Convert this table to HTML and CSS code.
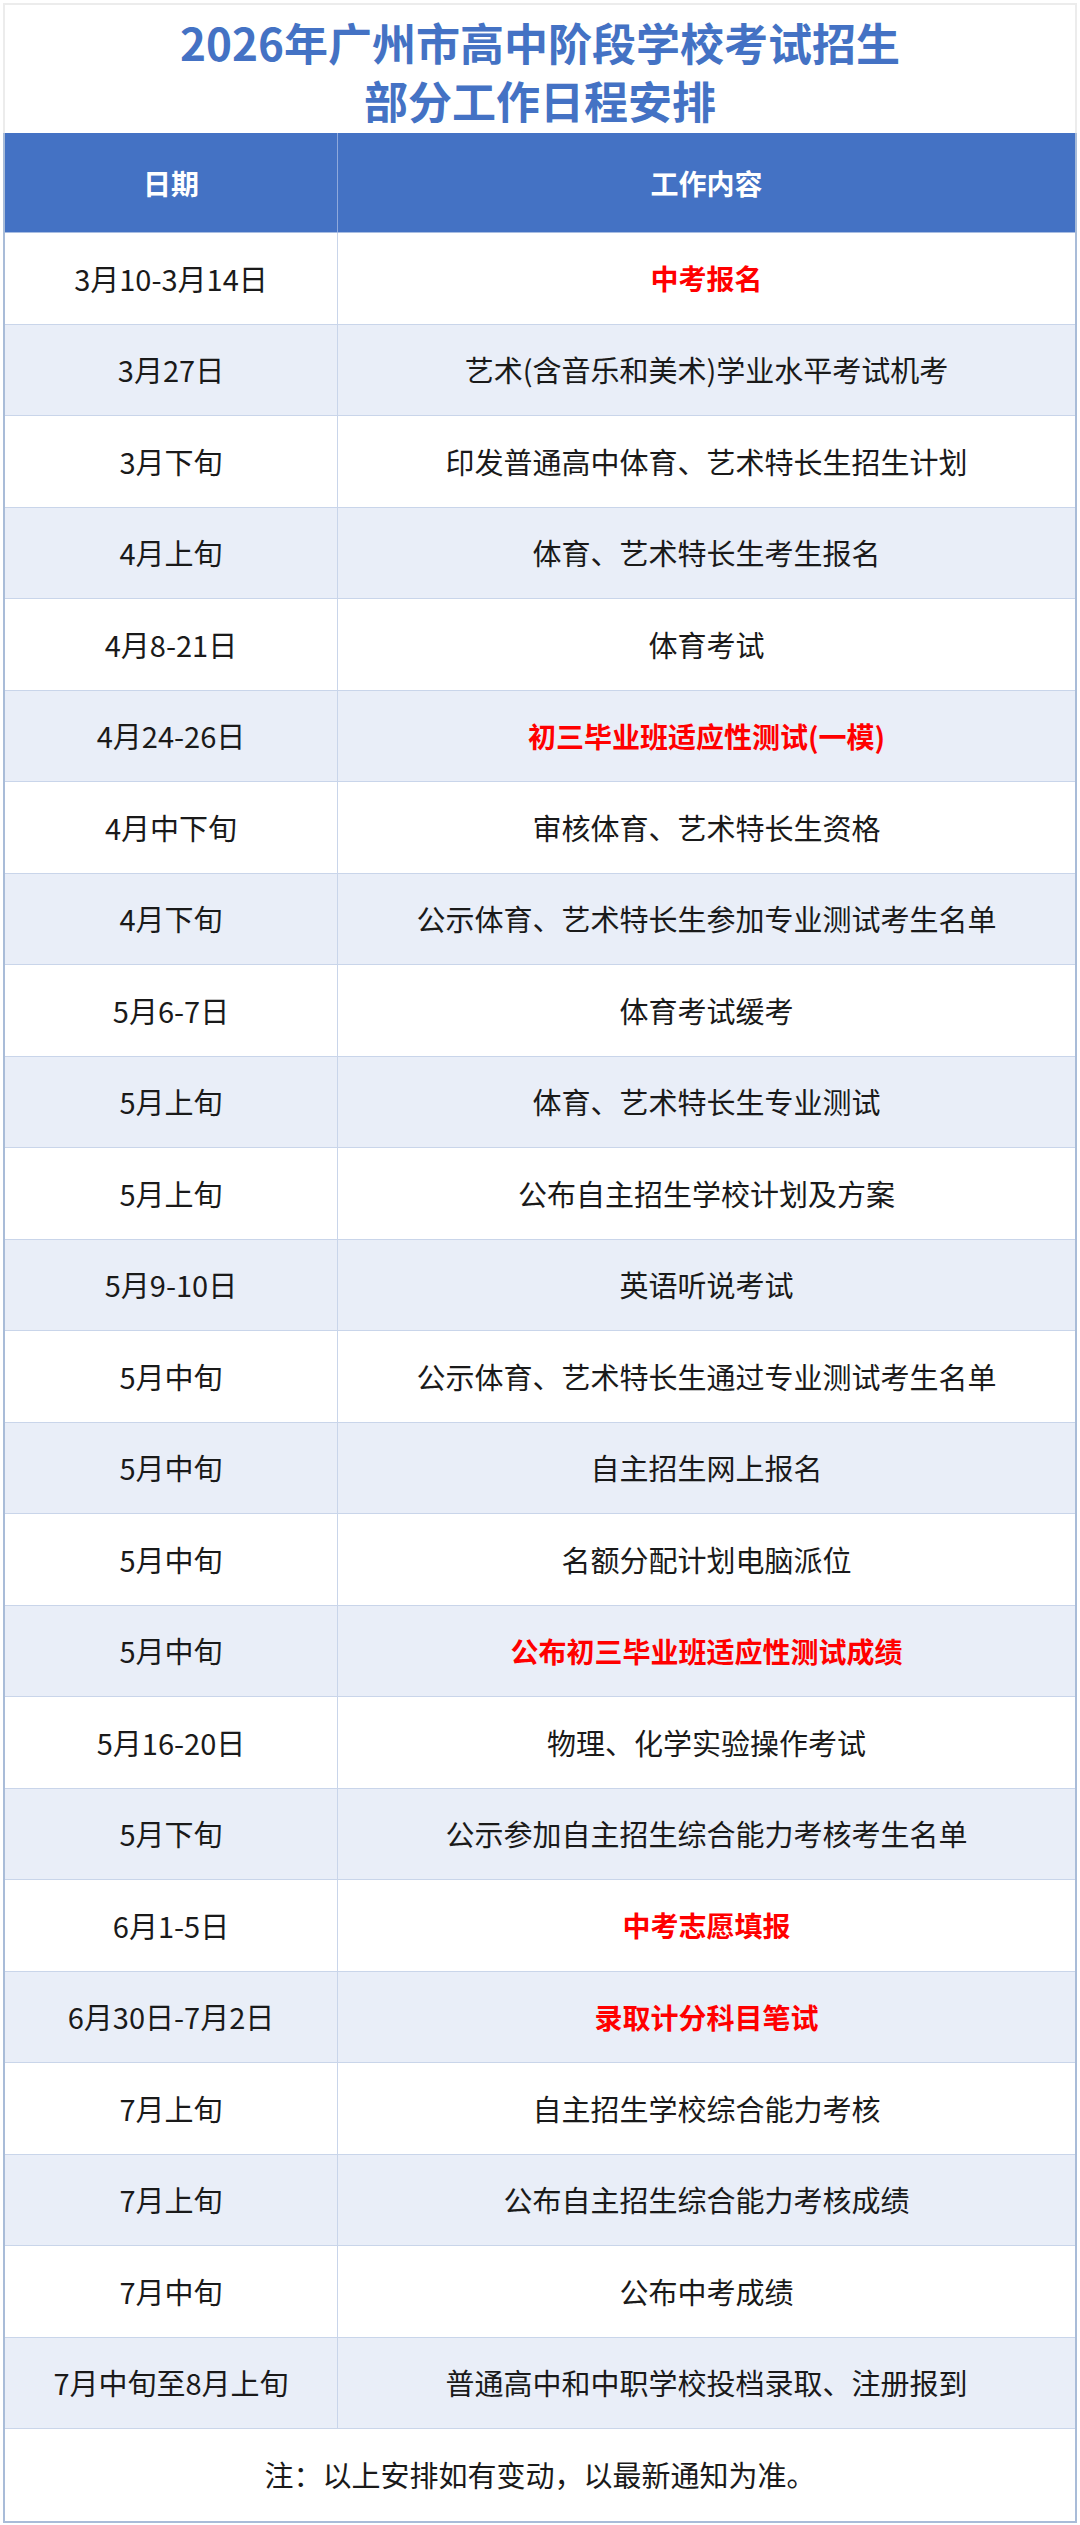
FILE: index.html
```html
<!DOCTYPE html>
<html lang="zh-CN">
<head>
<meta charset="utf-8">
<title>2026年广州市高中阶段学校考试招生部分工作日程安排</title>
<link rel="stylesheet" href="styles.css">
</head>
<body>
<div class="sheet">
  <div class="title">
    <div class="title-line">2026年广州市高中阶段学校考试招生</div>
    <div class="title-line">部分工作日程安排</div>
  </div>
  <div class="table">
    <div class="row head"><div class="cell date">日期</div><div class="cell work">工作内容</div></div>
    <div class="row"><div class="cell date">3月10-3月14日</div><div class="cell work hl">中考报名</div></div>
    <div class="row alt"><div class="cell date">3月27日</div><div class="cell work">艺术(含音乐和美术)学业水平考试机考</div></div>
    <div class="row"><div class="cell date">3月下旬</div><div class="cell work">印发普通高中体育、艺术特长生招生计划</div></div>
    <div class="row alt"><div class="cell date">4月上旬</div><div class="cell work">体育、艺术特长生考生报名</div></div>
    <div class="row"><div class="cell date">4月8-21日</div><div class="cell work">体育考试</div></div>
    <div class="row alt"><div class="cell date">4月24-26日</div><div class="cell work hl">初三毕业班适应性测试(一模)</div></div>
    <div class="row"><div class="cell date">4月中下旬</div><div class="cell work">审核体育、艺术特长生资格</div></div>
    <div class="row alt"><div class="cell date">4月下旬</div><div class="cell work">公示体育、艺术特长生参加专业测试考生名单</div></div>
    <div class="row"><div class="cell date">5月6-7日</div><div class="cell work">体育考试缓考</div></div>
    <div class="row alt"><div class="cell date">5月上旬</div><div class="cell work">体育、艺术特长生专业测试</div></div>
    <div class="row"><div class="cell date">5月上旬</div><div class="cell work">公布自主招生学校计划及方案</div></div>
    <div class="row alt"><div class="cell date">5月9-10日</div><div class="cell work">英语听说考试</div></div>
    <div class="row"><div class="cell date">5月中旬</div><div class="cell work">公示体育、艺术特长生通过专业测试考生名单</div></div>
    <div class="row alt"><div class="cell date">5月中旬</div><div class="cell work">自主招生网上报名</div></div>
    <div class="row"><div class="cell date">5月中旬</div><div class="cell work">名额分配计划电脑派位</div></div>
    <div class="row alt"><div class="cell date">5月中旬</div><div class="cell work hl">公布初三毕业班适应性测试成绩</div></div>
    <div class="row"><div class="cell date">5月16-20日</div><div class="cell work">物理、化学实验操作考试</div></div>
    <div class="row alt"><div class="cell date">5月下旬</div><div class="cell work">公示参加自主招生综合能力考核考生名单</div></div>
    <div class="row"><div class="cell date">6月1-5日</div><div class="cell work hl">中考志愿填报</div></div>
    <div class="row alt"><div class="cell date">6月30日-7月2日</div><div class="cell work hl">录取计分科目笔试</div></div>
    <div class="row"><div class="cell date">7月上旬</div><div class="cell work">自主招生学校综合能力考核</div></div>
    <div class="row alt"><div class="cell date">7月上旬</div><div class="cell work">公布自主招生综合能力考核成绩</div></div>
    <div class="row"><div class="cell date">7月中旬</div><div class="cell work">公布中考成绩</div></div>
    <div class="row alt"><div class="cell date">7月中旬至8月上旬</div><div class="cell work">普通高中和中职学校投档录取、注册报到</div></div>
    <div class="row note"><div class="cell full">注：以上安排如有变动，以最新通知为准。</div></div>
  </div>
</div>
</body>
</html>
```

FILE: styles.css
```css
html, body {
  margin: 0;
  padding: 0;
  background: #ffffff;
}

body {
  font-family: "Noto Sans CJK SC", "Noto Sans", sans-serif;
  color: #1a1a1a;
}

.sheet {
  margin: 3px 3px 0 3px;
  width: 1074px;
}

.title {
  height: 130px;
  box-sizing: border-box;
  border: 2px solid #ececec;
  border-bottom: none;
  padding-top: 8px;
  text-align: center;
}

.title-line {
  font-size: 44px;
  line-height: 58px;
  font-weight: 700;
  color: #4472c4;
}

.table {
  border-left: 2px solid #a9bcd8;
  border-right: 2px solid #a9bcd8;
  border-bottom: 2px solid #a9bcd8;
}

.row {
  display: grid;
  grid-template-columns: 333px 1fr;
  height: 91.5px;
  box-sizing: border-box;
  border-bottom: 1px solid #c9d5ea;
  background: #ffffff;
}

.row.alt {
  background: #e9eef8;
}

.row.head {
  height: 100px;
  background: #4472c4;
  border-bottom: 1px solid #a8bde2;
}

.row.note {
  grid-template-columns: 1fr;
  border-bottom: none;
}

.cell {
  display: flex;
  align-items: center;
  justify-content: center;
  font-size: 29px;
  line-height: 1;
  text-align: center;
}

.cell.date {
  border-right: 1px solid #c9d5ea;
  color: #1a1a1a;
}

.head .cell {
  color: #ffffff;
  font-weight: 700;
  font-size: 28px;
}

.head .cell.date {
  border-right: 1px solid #8fa9dc;
}

.cell.hl {
  color: #ff0000;
  font-weight: 700;
  font-size: 28px;
}

.cell.full {
  color: #1a1a1a;
}
```
